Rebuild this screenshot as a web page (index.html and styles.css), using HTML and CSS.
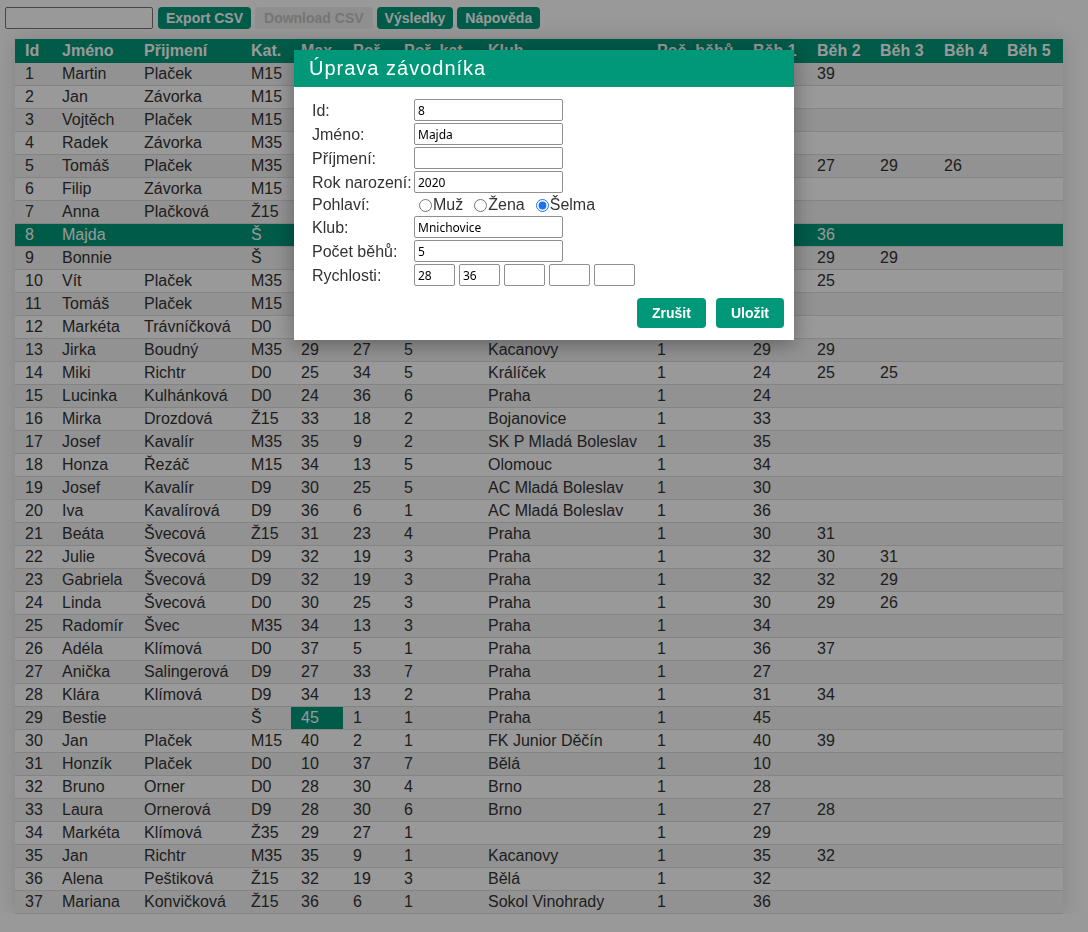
FILE: index.html
```html
<!DOCTYPE html>
<html lang="cs">
<head>
<meta charset="utf-8">
<title>Závodníci</title>
<link rel="stylesheet" href="styles.css">
</head>
<body>
<div class="toolbar">
  <input class="search" type="text">
  <button class="btn">Export CSV</button>
  <button class="btn" disabled>Download CSV</button>
  <button class="btn">Výsledky</button>
  <button class="btn">Nápověda</button>
</div>

<table class="runners">
  <colgroup>
    <col class="c-id"><col class="c-jm"><col class="c-pr"><col class="c-kat"><col class="c-max"><col class="c-por"><col class="c-pk"><col class="c-klub"><col class="c-poc"><col class="c-b1"><col class="c-b2"><col class="c-b3"><col class="c-b4"><col class="c-b5">
  </colgroup>
  <tbody>
    <tr class="head"><th>Id</th><th>Jméno</th><th>Přijmení</th><th>Kat.</th><th>Max</th><th>Poř</th><th>Poř. kat.</th><th>Klub</th><th>Poč. běhů</th><th>Běh 1</th><th>Běh 2</th><th>Běh 3</th><th>Běh 4</th><th>Běh 5</th></tr>
    <tr><td>1</td><td>Martin</td><td>Plaček</td><td>M15</td><td>39</td><td>3</td><td>1</td><td>Mnichovice</td><td>2</td><td>35</td><td>39</td><td></td><td></td><td></td></tr>
    <tr><td>2</td><td>Jan</td><td>Závorka</td><td>M15</td><td>33</td><td>17</td><td>4</td><td>Mnichovice</td><td>1</td><td>33</td><td></td><td></td><td></td><td></td></tr>
    <tr><td>3</td><td>Vojtěch</td><td>Plaček</td><td>M15</td><td>36</td><td>8</td><td>2</td><td>Mnichovice</td><td>1</td><td>36</td><td></td><td></td><td></td><td></td></tr>
    <tr><td>4</td><td>Radek</td><td>Závorka</td><td>M35</td><td>31</td><td>22</td><td>4</td><td>Mnichovice</td><td>1</td><td>31</td><td></td><td></td><td></td><td></td></tr>
    <tr><td>5</td><td>Tomáš</td><td>Plaček</td><td>M35</td><td>30</td><td>25</td><td>6</td><td>Mnichovice</td><td>4</td><td>30</td><td>27</td><td>29</td><td>26</td><td></td></tr>
    <tr><td>6</td><td>Filip</td><td>Závorka</td><td>M15</td><td>32</td><td>19</td><td>6</td><td>Mnichovice</td><td>1</td><td>32</td><td></td><td></td><td></td><td></td></tr>
    <tr><td>7</td><td>Anna</td><td>Plačková</td><td>Ž15</td><td>29</td><td>27</td><td>5</td><td>Mnichovice</td><td>1</td><td>29</td><td></td><td></td><td></td><td></td></tr>
    <tr class="sel"><td>8</td><td>Majda</td><td></td><td>Š</td><td>36</td><td>6</td><td>2</td><td>Mnichovice</td><td>5</td><td>28</td><td>36</td><td></td><td></td><td></td></tr>
    <tr><td>9</td><td>Bonnie</td><td></td><td>Š</td><td>31</td><td>23</td><td>3</td><td>Mnichovice</td><td>3</td><td>31</td><td>29</td><td>29</td><td></td><td></td></tr>
    <tr><td>10</td><td>Vít</td><td>Plaček</td><td>M35</td><td>28</td><td>30</td><td>7</td><td>Mnichovice</td><td>2</td><td>28</td><td>25</td><td></td><td></td><td></td></tr>
    <tr><td>11</td><td>Tomáš</td><td>Plaček</td><td>M15</td><td>34</td><td>13</td><td>5</td><td>Mnichovice</td><td>1</td><td>34</td><td></td><td></td><td></td><td></td></tr>
    <tr><td>12</td><td>Markéta</td><td>Trávníčková</td><td>D0</td><td>26</td><td>35</td><td>5</td><td>Mnichovice</td><td>1</td><td>26</td><td></td><td></td><td></td><td></td></tr>
    <tr><td>13</td><td>Jirka</td><td>Boudný</td><td>M35</td><td>29</td><td>27</td><td>5</td><td>Kacanovy</td><td>1</td><td>29</td><td>29</td><td></td><td></td><td></td></tr>
    <tr><td>14</td><td>Miki</td><td>Richtr</td><td>D0</td><td>25</td><td>34</td><td>5</td><td>Králíček</td><td>1</td><td>24</td><td>25</td><td>25</td><td></td><td></td></tr>
    <tr><td>15</td><td>Lucinka</td><td>Kulhánková</td><td>D0</td><td>24</td><td>36</td><td>6</td><td>Praha</td><td>1</td><td>24</td><td></td><td></td><td></td><td></td></tr>
    <tr><td>16</td><td>Mirka</td><td>Drozdová</td><td>Ž15</td><td>33</td><td>18</td><td>2</td><td>Bojanovice</td><td>1</td><td>33</td><td></td><td></td><td></td><td></td></tr>
    <tr><td>17</td><td>Josef</td><td>Kavalír</td><td>M35</td><td>35</td><td>9</td><td>2</td><td>SK P Mladá Boleslav</td><td>1</td><td>35</td><td></td><td></td><td></td><td></td></tr>
    <tr><td>18</td><td>Honza</td><td>Řezáč</td><td>M15</td><td>34</td><td>13</td><td>5</td><td>Olomouc</td><td>1</td><td>34</td><td></td><td></td><td></td><td></td></tr>
    <tr><td>19</td><td>Josef</td><td>Kavalír</td><td>D9</td><td>30</td><td>25</td><td>5</td><td>AC Mladá Boleslav</td><td>1</td><td>30</td><td></td><td></td><td></td><td></td></tr>
    <tr><td>20</td><td>Iva</td><td>Kavalírová</td><td>D9</td><td>36</td><td>6</td><td>1</td><td>AC Mladá Boleslav</td><td>1</td><td>36</td><td></td><td></td><td></td><td></td></tr>
    <tr><td>21</td><td>Beáta</td><td>Švecová</td><td>Ž15</td><td>31</td><td>23</td><td>4</td><td>Praha</td><td>1</td><td>30</td><td>31</td><td></td><td></td><td></td></tr>
    <tr><td>22</td><td>Julie</td><td>Švecová</td><td>D9</td><td>32</td><td>19</td><td>3</td><td>Praha</td><td>1</td><td>32</td><td>30</td><td>31</td><td></td><td></td></tr>
    <tr><td>23</td><td>Gabriela</td><td>Švecová</td><td>D9</td><td>32</td><td>19</td><td>3</td><td>Praha</td><td>1</td><td>32</td><td>32</td><td>29</td><td></td><td></td></tr>
    <tr><td>24</td><td>Linda</td><td>Švecová</td><td>D0</td><td>30</td><td>25</td><td>3</td><td>Praha</td><td>1</td><td>30</td><td>29</td><td>26</td><td></td><td></td></tr>
    <tr><td>25</td><td>Radomír</td><td>Švec</td><td>M35</td><td>34</td><td>13</td><td>3</td><td>Praha</td><td>1</td><td>34</td><td></td><td></td><td></td><td></td></tr>
    <tr><td>26</td><td>Adéla</td><td>Klímová</td><td>D0</td><td>37</td><td>5</td><td>1</td><td>Praha</td><td>1</td><td>36</td><td>37</td><td></td><td></td><td></td></tr>
    <tr><td>27</td><td>Anička</td><td>Salingerová</td><td>D9</td><td>27</td><td>33</td><td>7</td><td>Praha</td><td>1</td><td>27</td><td></td><td></td><td></td><td></td></tr>
    <tr><td>28</td><td>Klára</td><td>Klímová</td><td>D9</td><td>34</td><td>13</td><td>2</td><td>Praha</td><td>1</td><td>31</td><td>34</td><td></td><td></td><td></td></tr>
    <tr><td>29</td><td>Bestie</td><td></td><td>Š</td><td class="max">45</td><td>1</td><td>1</td><td>Praha</td><td>1</td><td>45</td><td></td><td></td><td></td><td></td></tr>
    <tr><td>30</td><td>Jan</td><td>Plaček</td><td>M15</td><td>40</td><td>2</td><td>1</td><td>FK Junior Děčín</td><td>1</td><td>40</td><td>39</td><td></td><td></td><td></td></tr>
    <tr><td>31</td><td>Honzík</td><td>Plaček</td><td>D0</td><td>10</td><td>37</td><td>7</td><td>Bělá</td><td>1</td><td>10</td><td></td><td></td><td></td><td></td></tr>
    <tr><td>32</td><td>Bruno</td><td>Orner</td><td>D0</td><td>28</td><td>30</td><td>4</td><td>Brno</td><td>1</td><td>28</td><td></td><td></td><td></td><td></td></tr>
    <tr><td>33</td><td>Laura</td><td>Ornerová</td><td>D9</td><td>28</td><td>30</td><td>6</td><td>Brno</td><td>1</td><td>27</td><td>28</td><td></td><td></td><td></td></tr>
    <tr><td>34</td><td>Markéta</td><td>Klímová</td><td>Ž35</td><td>29</td><td>27</td><td>1</td><td></td><td>1</td><td>29</td><td></td><td></td><td></td><td></td></tr>
    <tr><td>35</td><td>Jan</td><td>Richtr</td><td>M35</td><td>35</td><td>9</td><td>1</td><td>Kacanovy</td><td>1</td><td>35</td><td>32</td><td></td><td></td><td></td></tr>
    <tr><td>36</td><td>Alena</td><td>Peštiková</td><td>Ž15</td><td>32</td><td>19</td><td>3</td><td>Bělá</td><td>1</td><td>32</td><td></td><td></td><td></td><td></td></tr>
    <tr><td>37</td><td>Mariana</td><td>Konvičková</td><td>Ž15</td><td>36</td><td>6</td><td>1</td><td>Sokol Vinohrady</td><td>1</td><td>36</td><td></td><td></td><td></td><td></td></tr>
  </tbody>
</table>

<div class="overlay"></div>

<div class="modal">
  <div class="modal-head">Úprava závodníka</div>
  <div class="modal-body">
    <div class="form">
      <label class="lbl">Id:</label><input class="field" type="text" value="8">
      <label class="lbl">Jméno:</label><input class="field" type="text" value="Majda">
      <label class="lbl">Příjmení:</label><input class="field" type="text" value="">
      <label class="lbl">Rok narození:</label><input class="field" type="text" value="2020">
      <label class="lbl">Pohlaví:</label>
      <div class="radios">
        <label class="opt"><input type="radio" name="g">Muž</label>
        <label class="opt"><input type="radio" name="g">Žena</label>
        <label class="opt"><input type="radio" name="g" checked>Šelma</label>
      </div>
      <label class="lbl">Klub:</label><input class="field" type="text" value="Mnichovice">
      <label class="lbl">Počet běhů:</label><input class="field" type="text" value="5">
      <label class="lbl">Rychlosti:</label>
      <div class="speeds">
        <input class="field small" type="text" value="28">
        <input class="field small" type="text" value="36">
        <input class="field small" type="text" value="">
        <input class="field small" type="text" value="">
        <input class="field small" type="text" value="">
      </div>
    </div>
    <div class="actions">
      <button class="mbtn">Zrušit</button>
      <button class="mbtn">Uložit</button>
    </div>
  </div>
</div>
</body>
</html>
```

FILE: styles.css
```css
html, body {
  margin: 0;
  padding: 0;
  background: #fff;
  font-family: "Liberation Sans", Arial, sans-serif;
}

.toolbar {
  display: flex;
  align-items: center;
  gap: 4px;
  padding: 7px 0 0 5px;
  height: 22px;
}

.search {
  width: 148px;
  height: 22px;
  box-sizing: border-box;
  border: 1px solid #767676;
  border-radius: 2px;
  margin: 0 1px 0 0;
  padding: 0 3px;
}

.btn {
  height: 22px;
  padding: 0 8px;
  border: none;
  border-radius: 4px;
  background: #009879;
  color: #fff;
  font-family: "Liberation Sans", Arial, sans-serif;
  font-weight: bold;
  font-size: 14px;
  line-height: 22px;
}

.btn:disabled {
  background: #efefef;
  color: #c4c4c4;
  padding: 0 9px;
}

.runners {
  margin: 10px 0 0 15px;
  width: 1048px;
  table-layout: fixed;
  border-collapse: collapse;
  font-size: 16px;
  color: #333;
  box-shadow: 0 0 20px rgba(0, 0, 0, 0.15);
}

.c-id { width: 37px; }
.c-jm { width: 82px; }
.c-pr { width: 107px; }
.c-kat { width: 50px; }
.c-max { width: 52px; }
.c-por { width: 51px; }
.c-pk { width: 84px; }
.c-klub { width: 169px; }
.c-poc { width: 96px; }
.c-b1 { width: 64px; }
.c-b2 { width: 63px; }
.c-b3 { width: 64px; }
.c-b4 { width: 63px; }
.c-b5 { width: 66px; }

.runners th,
.runners td {
  padding: 2px 10px;
  line-height: 18px;
  text-align: left;
  white-space: nowrap;
  overflow: hidden;
}

.runners td {
  border-bottom: 1px solid #dddddd;
}

.runners .head th {
  background: #009879;
  color: #fff;
  font-weight: bold;
  padding: 3px 10px 3px;
}

.runners tr:nth-of-type(even) {
  background: #f3f3f3;
}

.runners tr.sel {
  background: #009879;
  color: #fff;
}

.runners td.max {
  background: #009879;
  color: #fff;
}

.overlay {
  position: fixed;
  inset: 0;
  background: rgba(0, 0, 0, 0.4);
}

.modal {
  position: fixed;
  left: 294px;
  top: 50px;
  width: 500px;
  background: #fff;
  box-shadow: 0 4px 20px rgba(0, 0, 0, 0.35);
}

.modal-head {
  background: #009879;
  color: #fff;
  font-size: 20px;
  letter-spacing: 1px;
  line-height: 23px;
  padding: 7px 15px;
}

.modal-body {
  padding: 12px 10px 12px 18px;
}

.form {
  display: grid;
  grid-template-columns: 102px 1fr;
  row-gap: 2px;
  align-items: center;
  color: #333;
  font-size: 16px;
}

.lbl {
  line-height: 19px;
  white-space: nowrap;
}

.field {
  box-sizing: border-box;
  width: 149px;
  height: 22px;
  border: 1px solid #8f8f8f;
  border-radius: 2px;
  padding: 0 3px;
  font-family: "Noto Sans", "Open Sans", sans-serif;
  font-size: 12px;
  color: #000;
  margin: 0;
}

.radios {
  display: flex;
  align-items: center;
  height: 19px;
  font-size: 16px;
}

.opt {
  display: flex;
  align-items: center;
  margin-right: 6px;
}

.opt input {
  width: 13px;
  height: 13px;
  margin: 1px 1px 0 5px;
  accent-color: #1a73e8;
}

.speeds {
  display: flex;
  gap: 4px;
}

.field.small {
  width: 41px;
}

.actions {
  display: flex;
  justify-content: flex-end;
  gap: 10px;
  margin-top: 12px;
}

.mbtn {
  height: 30px;
  padding: 0 15px;
  border: none;
  border-radius: 4px;
  background: #009879;
  color: #fff;
  font-family: "Liberation Sans", Arial, sans-serif;
  font-weight: bold;
  font-size: 14px;
}
```
